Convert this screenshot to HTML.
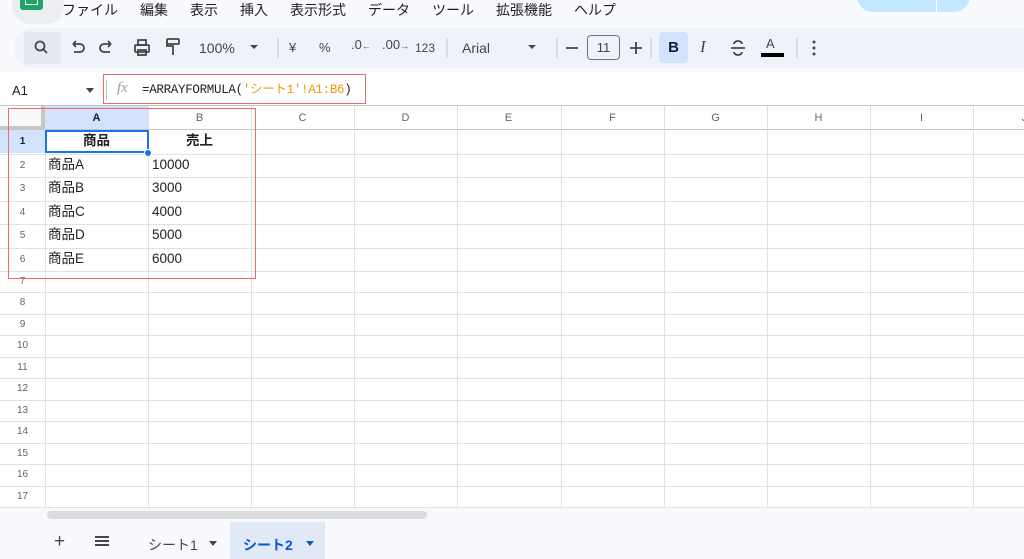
<!DOCTYPE html>
<html><head><meta charset="utf-8"><style>
*{margin:0;padding:0;box-sizing:border-box}
body{width:1024px;height:559px;overflow:hidden;background:#fff;position:relative;font-family:"Liberation Sans","Noto Sans CJK JP",sans-serif;color:#444746}
.a{position:absolute}
.menu span{margin-right:22px}
.tb{font-size:14px;color:#444746}
.vl{position:absolute;width:1px;background:#e1e1e1}
.hl{position:absolute;height:1px;background:#e1e1e1}
.ch{position:absolute;top:106px;height:24px;line-height:24px;text-align:center;font-size:11px;color:#5f6368;width:103px}
.rh{position:absolute;left:0;width:45px;text-align:center;font-size:10px;color:#5f6368}
.c{position:absolute;font-size:13.5px;color:#202124;line-height:16px}
</style></head><body>
<div class="a" style="left:0;top:0;width:1024px;height:72px;background:#f8fafd"></div>
<div class="a" style="left:12px;top:-12px;width:52px;height:36px;border-radius:26px;background:#eceef2"></div>
<div class="a" style="left:20px;top:0;width:23px;height:10px;background:#1fa463;border-radius:0 0 3px 3px"></div>
<div class="a" style="left:25px;top:0;width:13px;height:5px;border:1.5px solid #fff;border-top:none"></div>
<div class="a menu" style="left:62px;top:0;font-size:14px;color:#1f1f1f;white-space:nowrap"><span>ファイル</span><span>編集</span><span>表示</span><span>挿入</span><span>表示形式</span><span>データ</span><span>ツール</span><span>拡張機能</span><span>ヘルプ</span></div>
<div class="a" style="left:857px;top:-20px;width:113px;height:32px;border-radius:16px;background:#c2e7ff"></div>
<div class="a" style="left:936px;top:0;width:1px;height:12px;background:#fff"></div>
<div class="a" style="left:14px;top:28px;width:1030px;height:40px;border-radius:20px;background:#eef2f9"></div>
<div class="a" style="left:24px;top:32px;width:37px;height:32px;background:#e3e8f1;border-radius:4px"></div>
<svg class="a" style="left:0;top:28px" width="1024" height="40" fill="none" stroke="#444746" stroke-width="1.8">
<circle cx="40" cy="18" r="4.5"/><path d="M43 21l4 4"/>
<path d="M73 16h7a4 4 0 0 1 0 8h-6M73 16l3-3M73 16l3 3"/>
<path d="M111 16h-7a4 4 0 0 0 0 8h6M111 16l-3-3M111 16l-3 3"/>
<rect x="135" y="17" width="14" height="7" rx="1"/><rect x="138" y="12" width="8" height="5"/><rect x="138" y="22" width="8" height="5"/>
<rect x="167" y="11" width="12" height="5" rx="1"/><path d="M167 13v5h6v4M173 22v5"/>
<path d="M250 17h8l-4 4z" fill="#444746" stroke="none"/>
<path d="M278 10v20M447 10v20M557 10v20M651 10v20M797 10v20" stroke="#c4c7c5" stroke-width="1"/>
<path d="M528 17h8l-4 4z" fill="#444746" stroke="none"/>
<path d="M566 20h12M630 20h12M636 14v12" />
<path d="M731 20h14M734 16a4 3 0 0 1 8 0M734 24a4 3 0 0 0 8 0"/>
<rect x="761" y="25" width="23" height="4" fill="#000" stroke="none"/>
<circle cx="814" cy="14" r="1.5" fill="#444746" stroke="none"/><circle cx="814" cy="20" r="1.5" fill="#444746" stroke="none"/><circle cx="814" cy="26" r="1.5" fill="#444746" stroke="none"/>
</svg>
<div class="a tb" style="left:199px;top:40px">100%</div>
<div class="a tb" style="left:289px;top:40px;font-size:13px">¥</div>
<div class="a tb" style="left:319px;top:40px;font-size:13px">%</div>
<div class="a tb" style="left:351px;top:37px;font-size:13px">.0<span style="font-size:9px">←</span></div>
<div class="a tb" style="left:382px;top:37px;font-size:13px">.00<span style="font-size:9px">→</span></div>
<div class="a tb" style="left:415px;top:41px;font-size:12px">123</div>
<div class="a tb" style="left:462px;top:40px">Arial</div>
<div class="a" style="left:587px;top:35px;width:33px;height:25px;border:1px solid #747775;border-radius:4px;font-size:13px;text-align:center;line-height:23px">11</div>
<div class="a" style="left:659px;top:32px;width:29px;height:31px;background:#d3e3fd;border-radius:4px;text-align:center;line-height:31px;font-weight:bold;font-size:15px;color:#0b1d3f">B</div>
<div class="a" style="left:700px;top:37px;font-size:17px;font-style:italic;font-family:'Liberation Serif',serif;color:#444746">I</div>
<div class="a" style="left:766px;top:36px;font-size:13px;color:#444746">A</div>
<div class="a" style="left:12px;top:83px;font-size:13px;color:#1f1f1f">A1</div>
<div class="a" style="left:86px;top:88px;border:4px solid transparent;border-top:5px solid #444746"></div>
<div class="a" style="left:106px;top:80px;width:1px;height:20px;background:#c4c7c5"></div>
<div class="a" style="left:117px;top:80px;font-size:15px;font-style:italic;font-family:'Liberation Serif',serif;color:#9aa0a6">fx</div>
<div class="a" style="left:142px;top:82px;font-size:12.5px;line-height:16px;font-family:'Liberation Mono','Noto Sans CJK JP',monospace;color:#1f1f1f;letter-spacing:-0.3px">=ARRAYFORMULA(<span style="color:#f29900">'シート1'!</span><span style="color:#f29900">A1:B6</span>)</div>
<div class="a" style="left:103px;top:74px;width:263px;height:30px;border:1.5px solid #f06a6a"></div>
<div class="a" style="left:0;top:105px;width:1024px;height:1px;background:#c4c7c5"></div>
<div class="a" style="left:0;top:106px;width:45px;height:24px;background:#f8f9fa;border-right:4px solid #c4c7c5;border-bottom:4px solid #c4c7c5"></div>
<div class="a" style="left:45px;top:106px;width:103px;height:24px;background:#d3e3fd"></div>
<div class="a" style="left:0;top:130px;width:45px;height:23px;background:#d3e3fd"></div>
<div class="hl" style="left:0;top:129px;width:1024px;background:#c4c7c5"></div>
<div id="g"></div>
<div class="ch" style="left:45px;color:#0b1d3f;font-weight:bold">A</div><div class="ch" style="left:148px">B</div><div class="ch" style="left:251px">C</div><div class="ch" style="left:354px">D</div><div class="ch" style="left:457px">E</div><div class="ch" style="left:561px">F</div><div class="ch" style="left:664px">G</div><div class="ch" style="left:767px">H</div><div class="ch" style="left:870px">I</div><div class="ch" style="left:973px">J</div>
<div class="c" style="left:45px;top:133px;width:103px;text-align:center;font-weight:bold">商品</div>
<div class="c" style="left:148px;top:133px;width:103px;text-align:center;font-weight:bold">売上</div>
<div class="c" style="left:48px;top:157px">商品A</div><div class="c" style="left:152px;top:157px">10000</div>
<div class="c" style="left:48px;top:180px">商品B</div><div class="c" style="left:152px;top:180px">3000</div>
<div class="c" style="left:48px;top:204px">商品C</div><div class="c" style="left:152px;top:204px">4000</div>
<div class="c" style="left:48px;top:227px">商品D</div><div class="c" style="left:152px;top:227px">5000</div>
<div class="c" style="left:48px;top:251px">商品E</div><div class="c" style="left:152px;top:251px">6000</div>
<div class="a" style="left:45px;top:130px;width:104px;height:23px;border:2px solid #1a73e8"></div>
<div class="a" style="left:144px;top:149px;width:8px;height:8px;border-radius:50%;background:#1a73e8;border:1px solid #fff"></div>
<div class="a" style="left:8px;top:108px;width:248px;height:171px;border:1.5px solid #f06a6a"></div>
<div class="a" style="left:0;top:507px;width:1024px;height:15px;background:#f8f9fa;border-top:1px solid #e1e1e1"></div>
<div class="a" style="left:47px;top:511px;width:380px;height:8px;border-radius:4px;background:#dadce0"></div>
<div class="a" style="left:0;top:522px;width:1024px;height:37px;background:#f8fafd"></div>
<div class="a" style="left:54px;top:531px;font-size:19px;color:#444746">+</div>
<div class="a" style="left:95px;top:536px;width:14px;height:2px;background:#444746;box-shadow:0 4px 0 #444746,0 8px 0 #444746"></div>
<div class="a" style="left:148px;top:535px;font-size:14px;color:#444746">シート1</div>
<div class="a" style="left:209px;top:541px;border:4px solid transparent;border-top:5px solid #444746"></div>
<div class="a" style="left:230px;top:522px;width:95px;height:37px;background:#e1e9f7"></div>
<div class="a" style="left:243px;top:535px;font-size:14px;color:#0b57d0;font-weight:bold">シート2</div>
<div class="a" style="left:306px;top:541px;border:4px solid transparent;border-top:5px solid #0b57d0"></div>
<script>
var g=document.getElementById('g'),h='';
var xs=[45,148,251,354,457,561,664,767,870,973];
xs.forEach(function(x){h+='<div class="vl" style="left:'+x+'px;top:106px;height:401px"></div>'});
var ys=[130,153.5,177,200.5,224,247.5,271];
for(var i=1;i<=11;i++)ys.push(271+i*21.45);
for(var r=0;r<ys.length-1;r++){
 h+='<div class="hl" style="left:0;top:'+Math.round(ys[r+1])+'px;width:1024px"></div>';
 h+='<div class="rh" style="top:'+Math.round(ys[r])+'px;height:'+(ys[r+1]-ys[r])+'px;line-height:'+(ys[r+1]-ys[r])+'px'+(r==0?';color:#0b1d3f;font-weight:bold':'')+'">'+(r+1)+'</div>';
}
g.innerHTML=h;
</script>
</body></html>
